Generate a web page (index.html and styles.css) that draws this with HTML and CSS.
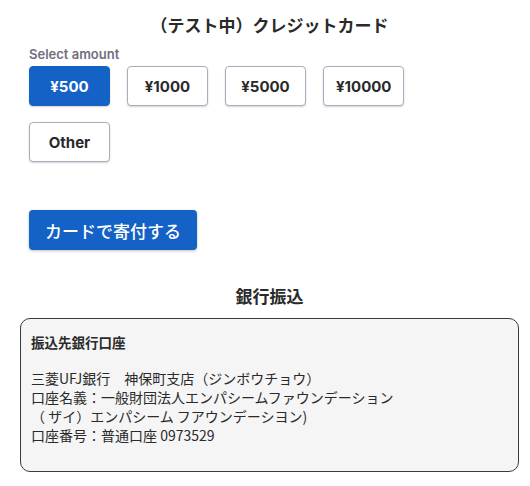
FILE: index.html
```html
<!DOCTYPE html>
<html lang="ja">
<head>
<meta charset="utf-8">
<title>寄付</title>
<link rel="stylesheet" href="styles.css">
</head>
<body>
<main class="page">
  <h2 class="title">（テスト中）クレジットカード</h2>
  <section class="amount">
    <div class="label">Select amount</div>
    <div class="options">
      <button class="opt active">¥500</button>
      <button class="opt">¥1000</button>
      <button class="opt">¥5000</button>
      <button class="opt">¥10000</button>
      <button class="opt">Other</button>
    </div>
    <button class="donate">カードで寄付する</button>
  </section>
  <h2 class="title bank-title">銀行振込</h2>
  <div class="bank">
    <p class="bank-head">振込先銀行口座</p>
    <p class="bank-lines">三菱UFJ銀行　神保町支店（ジンボウチョウ）<br>口座名義：一般財団法人エンパシームファウンデーション<br>（ ザイ）エンパシーム フアウンデーシヨン)<br>口座番号：普通口座 0973529</p>
  </div>
</main>
</body>
</html>
```

FILE: styles.css
```css
html, body {
  margin: 0;
  padding: 0;
  background: #ffffff;
}
body {
  font-family: "Noto Sans CJK JP", "Inter", sans-serif;
  color: #2a2a2a;
}
.page {
  width: 499px;
  margin-left: 20px;
  padding-top: 13px;
}
.title {
  margin: 0;
  text-align: center;
  font-family: "Noto Sans CJK JP", sans-serif;
  font-size: 17px;
  font-weight: 700;
  line-height: 24px;
  color: #2a2a2a;
}
.amount {
  padding-left: 9px;
}
.label {
  margin-top: 9px;
  font-family: "Inter", "Noto Sans CJK JP", sans-serif;
  font-size: 13px;
  font-weight: 600;
  line-height: 16px;
  color: #6f6f80;
}
.options {
  display: flex;
  flex-wrap: wrap;
  column-gap: 17px;
  row-gap: 16px;
  width: 440px;
  margin-top: 4px;
}
.opt {
  box-sizing: border-box;
  min-width: 81px;
  height: 40px;
  padding: 0 12px;
  border: 1px solid #acacbe;
  border-radius: 4px;
  background: #ffffff;
  box-shadow: 0 1px 2px rgba(0, 0, 0, 0.18);
  font-family: "Inter", "Noto Sans CJK JP", sans-serif;
  font-size: 15px;
  font-weight: 700;
  color: #2a2a2a;
}
.opt.active {
  background: #1462c6;
  border-color: #1462c6;
  color: #ffffff;
}
.donate {
  display: block;
  box-sizing: border-box;
  height: 40px;
  margin-top: 48px;
  padding: 0 16px;
  border: none;
  border-radius: 4px;
  background: #1462c6;
  box-shadow: 0 1px 3px rgba(0, 0, 0, 0.25);
  font-family: "Noto Sans CJK JP", sans-serif;
  font-size: 17px;
  font-weight: 500;
  color: #ffffff;
}
.bank-title {
  margin-top: 34px;
}
.bank {
  margin-top: 10px;
  box-sizing: border-box;
  border: 1px solid #3a3a3a;
  border-radius: 10px;
  background: #f5f5f5;
  padding: 13px 10px 26px;
  font-size: 14px;
  color: #2a2a2a;
}
.bank p {
  margin: 0;
}
.bank-head {
  font-size: 13.5px;
  font-weight: 700;
  line-height: 20px;
}
.bank-lines {
  margin-top: 17px !important;
  line-height: 19px;
}
```
